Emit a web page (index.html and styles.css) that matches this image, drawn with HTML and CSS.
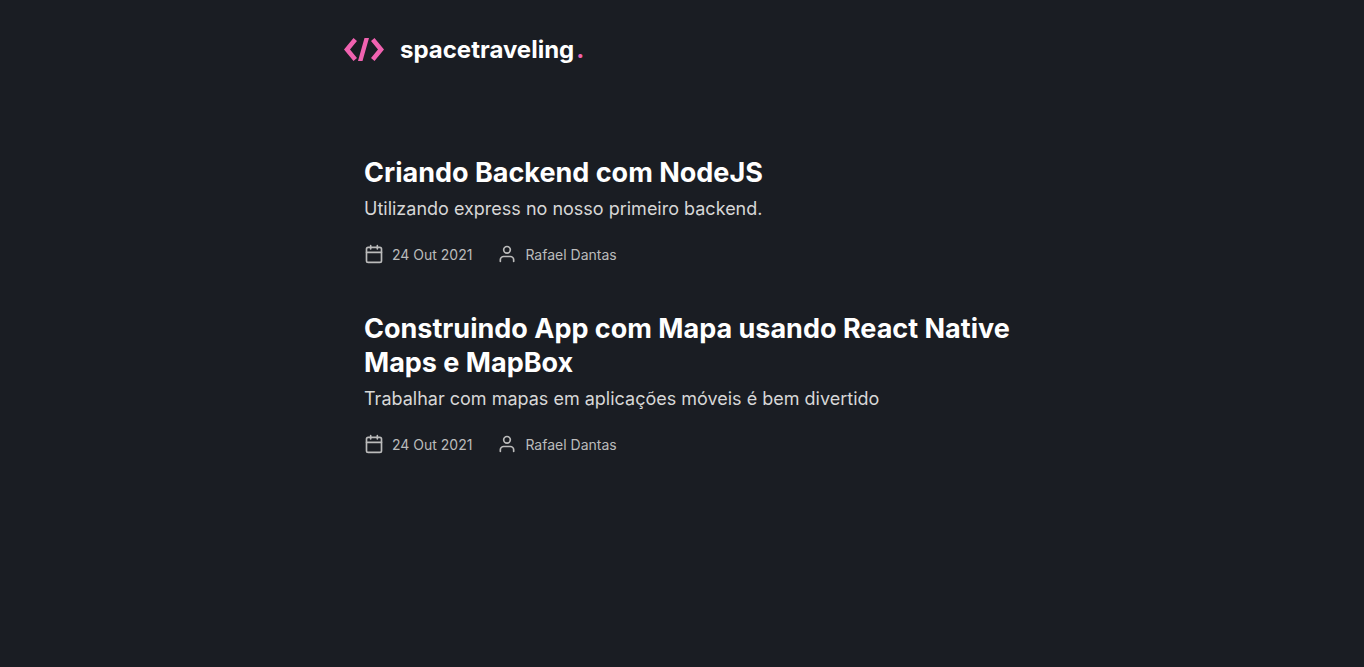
FILE: index.html
```
<!DOCTYPE html>
<html lang="pt-BR">
<head>
<meta charset="utf-8">
<title>spacetraveling</title>
<link rel="stylesheet" href="styles.css">
</head>
<body>
<svg class="sprite" aria-hidden="true">
  <symbol id="calendar" viewBox="0 0 24 24"><rect x="3" y="4" width="18" height="18" rx="2"/><path d="M16 2v4M8 2v4M3 10h18"/></symbol>
  <symbol id="user" viewBox="0 0 24 24"><path d="M20 21v-2a4 4 0 0 0-4-4H8a4 4 0 0 0-4 4v2"/><circle cx="12" cy="7" r="4"/></symbol>
</svg>
<header class="header">
  <a class="logo" href="#">
    <svg class="logo-mark" viewBox="0 0 40 26" aria-hidden="true"><path d="M9.500 1L13 4L6 12.500L13 21L9.500 24L0 12.500ZM20.500 1H25L18.500 24H14ZM30.500 1L40 12.500L30.500 24L27 21L34 12.500L27 4Z"/></svg>
    <span class="logo-name">spacetraveling<span class="logo-dot">.</span></span>
  </a>
</header>
<main class="posts">
  <a class="post" href="#">
    <h2 class="post-title">Criando Backend com NodeJS</h2>
    <p class="post-subtitle">Utilizando express no nosso primeiro backend.</p>
    <div class="post-info">
      <span class="info-item"><svg class="icon" aria-hidden="true"><use href="#calendar"/></svg><time datetime="2021-10-24">24 Out 2021</time></span>
      <span class="info-item"><svg class="icon" aria-hidden="true"><use href="#user"/></svg>Rafael Dantas</span>
    </div>
  </a>
  <a class="post" href="#">
    <h2 class="post-title">Construindo App com Mapa usando React Native Maps e MapBox</h2>
    <p class="post-subtitle">Trabalhar com mapas em aplicações móveis é bem divertido</p>
    <div class="post-info">
      <span class="info-item"><svg class="icon" aria-hidden="true"><use href="#calendar"/></svg><time datetime="2021-10-24">24 Out 2021</time></span>
      <span class="info-item"><svg class="icon" aria-hidden="true"><use href="#user"/></svg>Rafael Dantas</span>
    </div>
  </a>
</main>
</body>
</html>
```
FILE: styles.css
```
* { box-sizing: border-box; margin: 0; padding: 0; }
body { background: #1a1d23; color: #d7d7d7; font-family: Inter, sans-serif; }
a { color: inherit; text-decoration: none; }
.sprite { display: none; }
.header { max-width: 700px; margin: 0 auto; padding: 33px 12px 32px; }
.logo { display: inline-flex; align-items: center; gap: 16px; }
.logo-mark { width: 40px; height: 26px; fill: #f062b0; }
.logo-name { color: #fff; font-size: 24px; font-weight: 700; line-height: 34px; }
.logo-dot { color: #f062b0; margin-left: 2px; }
.posts { max-width: 700px; margin: 57px auto 0; padding-left: 32px; display: flex; flex-direction: column; gap: 46px; }
.post { display: block; }
.post-title { color: #fff; font-size: 27px; font-weight: 700; line-height: 34px; }
.post-subtitle { margin-top: 8px; font-size: 18px; line-height: 22px; }
.post-info { display: flex; gap: 25px; margin-top: 24px; color: #bbb; font-size: 14px; line-height: 22px; }
.info-item { display: flex; align-items: flex-start; gap: 8px; }
.icon { width: 20px; height: 20px; fill: none; stroke: currentColor; stroke-width: 2; stroke-linecap: round; stroke-linejoin: round; }
```
